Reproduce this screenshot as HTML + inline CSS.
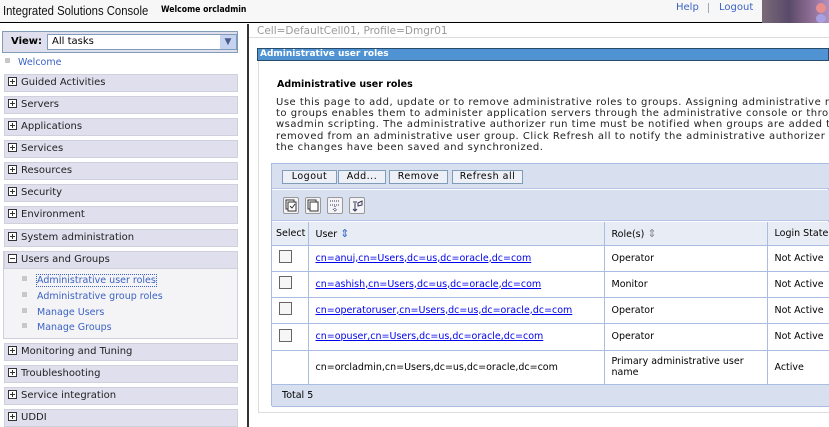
<!DOCTYPE html>
<html><head><style>
*{margin:0;padding:0;box-sizing:border-box}
body{width:829px;height:427px;overflow:hidden;background:#fff;font-family:"DejaVu Sans","Liberation Sans",sans-serif;font-size:9.5px;color:#000;position:relative}
.a{position:absolute;white-space:nowrap}
.nav{position:absolute;left:4px;width:234px;height:18px;background:#dfdfee;border:1px solid #d0d0dc;padding-left:3px;line-height:16px;font-size:10px;color:#222}
.pl{display:inline-block;width:9px;height:9px;border:1px solid #333;position:relative;vertical-align:-1px;margin-right:4px;background:#fff}
.pl:before{content:"";position:absolute;left:1px;top:3px;width:5px;height:1px;background:#333}
.pl.p:after{content:"";position:absolute;left:3px;top:1px;width:1px;height:5px;background:#333}
.lk{color:#3b62c4}
.bul{display:inline-block;width:5px;height:5px;background:#c8c8c8;margin-right:10px;vertical-align:2px}
.btn{position:absolute;top:170px;height:14px;border:1px solid #7f9db9;background:#eef0f8;font-size:9.5px;line-height:12px;text-align:center;letter-spacing:.5px}
.ic{position:absolute;top:197px;width:16px;height:17px;border:1px solid #999;background:#f4f4f8;border-radius:2px}
td{border-right:1px solid #a9bde3;border-bottom:1px solid #a9bde3;padding-left:7px;font-size:9.5px;white-space:nowrap}
a{color:#0000ee}
.cb{display:inline-block;width:13px;height:13px;border:1px solid #666;background:#f6f6f6}
</style></head><body>
<div class="a" style="left:0;top:0;width:829px;height:23px;background:#f7f7f7;border-bottom:1px solid #000"></div>
<div class="a" style="left:3px;top:3px;font-family:'Liberation Sans',sans-serif;font-size:13px;transform:scaleX(.87);transform-origin:left;color:#111">Integrated Solutions Console</div>
<div class="a" style="left:161px;top:5px;font-family:'DejaVu Sans',sans-serif;font-size:9px;font-weight:bold;transform:scaleX(.86);transform-origin:left">Welcome orcladmin</div>
<div class="a lk" style="left:676px;top:2px;font-size:10px">Help</div>
<div class="a" style="left:708px;top:3px;width:1px;height:10px;background:#9ab"></div>
<div class="a lk" style="left:719px;top:2px;font-size:10px">Logout</div>
<div class="a" style="left:762px;top:0;width:67px;height:23px;background:linear-gradient(90deg,#7a6a78,#5a4a6a 40%,#8a6a90 70%,#b090c0)"></div>
<div class="a" style="left:816px;top:3px;width:10px;height:10px;border-radius:50%;background:#e89090"></div>
<div class="a" style="left:816px;top:14px;width:10px;height:9px;border-radius:50%;background:#a8a0e0"></div>

<div class="a" style="left:247px;top:24px;width:2px;height:403px;background:#333"></div>
<!-- left nav -->
<div class="a" style="left:2px;top:31px;width:236px;height:22px;border:1px solid #7f9db9;background:#dfdfee"></div>
<div class="a" style="left:11px;top:36px;font-weight:bold;font-size:10px">View:</div>
<div class="a" style="left:47px;top:34px;width:190px;height:16px;background:#fff;border:1px solid #7f9db9;padding-left:4px;font-size:10px;line-height:14px">All tasks</div>
<div class="a" style="left:220px;top:35px;width:16px;height:14px;background:#c6d3f0;color:#4a5c8a;font-size:9px;text-align:center;line-height:14px">&#9660;</div>
<div class="a" style="left:5px;top:57px"><span class="bul" style="margin-right:8px"></span><span class="lk">Welcome</span></div>
<div class="nav" style="top:74px"><span class="pl p"></span>Guided Activities</div>
<div class="nav" style="top:96px"><span class="pl p"></span>Servers</div>
<div class="nav" style="top:118px"><span class="pl p"></span>Applications</div>
<div class="nav" style="top:140px"><span class="pl p"></span>Services</div>
<div class="nav" style="top:162px"><span class="pl p"></span>Resources</div>
<div class="nav" style="top:184px"><span class="pl p"></span>Security</div>
<div class="nav" style="top:206px"><span class="pl p"></span>Environment</div>
<div class="nav" style="top:229px"><span class="pl p"></span>System administration</div>
<div class="a" style="left:3px;top:251px;width:235px;height:88px;border:1px solid #d0d0dc;background:#f4f4f6"></div>
<div class="nav" style="top:251px"><span class="pl"></span>Users and Groups</div>
<div class="a" style="left:22px;top:275px"><span class="bul"></span><span class="lk" style="outline:1px dotted #3b62c4">Administrative user roles</span></div>
<div class="a" style="left:22px;top:291px"><span class="bul"></span><span class="lk">Administrative group roles</span></div>
<div class="a" style="left:22px;top:307px"><span class="bul"></span><span class="lk">Manage Users</span></div>
<div class="a" style="left:22px;top:322px"><span class="bul"></span><span class="lk">Manage Groups</span></div>
<div class="nav" style="top:343px"><span class="pl p"></span>Monitoring and Tuning</div>
<div class="nav" style="top:365px"><span class="pl p"></span>Troubleshooting</div>
<div class="nav" style="top:387px"><span class="pl p"></span>Service integration</div>
<div class="nav" style="top:409px"><span class="pl p"></span>UDDI</div>

<!-- right -->
<div class="a" style="left:257px;top:25px;font-size:10.5px;color:#999">Cell=DefaultCell01, Profile=Dmgr01</div>
<div class="a" style="left:249px;top:37px;width:580px;height:1px;background:#ddd"></div>
<div class="a" style="left:257px;top:48px;width:572px;height:13px;background:#4f93d3;border:1px solid #2a4a6a;color:#fff;font-weight:bold;font-size:9px;line-height:11px;padding-left:2px">Administrative user roles</div>
<div class="a" style="left:258px;top:61px;width:1px;height:351px;background:#ddd"></div>
<div class="a" style="left:258px;top:412px;width:571px;height:1px;background:#ddd"></div>
<div class="a" style="left:277px;top:79px;font-weight:bold;font-size:9.5px">Administrative user roles</div>
<div class="a" style="left:276px;top:97px;line-height:11.2px;font-size:10px;letter-spacing:.5px;color:#222">Use this page to add, update or to remove administrative roles to groups. Assigning administrative r<br>to groups enables them to administer application servers through the administrative console or throu<br>wsadmin scripting. The administrative authorizer run time must be notified when groups are added to<br>removed from an administrative user group. Click Refresh all to notify the administrative authorizer<br>the changes have been saved and synchronized.</div>

<div class="a" style="left:271px;top:163px;width:558px;height:243px;border:1px solid #a9bde3;background:#fff"></div>
<div class="a" style="left:272px;top:164px;width:557px;height:25px;background:#d8dfee;border-bottom:1px solid #b5c4e3"></div>
<div class="btn" style="left:282px;width:55px">Logout</div>
<div class="btn" style="left:338px;width:48px">Add...</div>
<div class="btn" style="left:389px;width:59px">Remove</div>
<div class="btn" style="left:452px;width:71px">Refresh all</div>
<div class="a" style="left:272px;top:190px;width:557px;height:31px;background:#d8dfee;border-bottom:1px solid #b5c4e3"></div>
<div class="ic" style="left:283px"><svg width="14" height="15"><rect x="2" y="2" width="8" height="9" fill="#fff" stroke="#333"/><rect x="4" y="4" width="8" height="9" fill="#fff" stroke="#333"/><path d="M6 8l2 2 3-4" stroke="#333" fill="none"/></svg></div>
<div class="ic" style="left:305px"><svg width="14" height="15"><rect x="2" y="2" width="8" height="9" fill="#fff" stroke="#333"/><rect x="4" y="4" width="8" height="9" fill="#fff" stroke="#333"/></svg></div>
<div class="ic" style="left:327px"><svg width="14" height="15"><path d="M2 3h10M2 7h10M7 8v5M5 11l2 2 2-2" stroke="#335" fill="none" stroke-dasharray="1 1"/></svg></div>
<div class="ic" style="left:349px"><svg width="14" height="15"><path d="M3 4h4M5 5v8M3 11l2 2 2-2M8 5l4-2v4l-4 1z" stroke="#335" fill="none"/></svg></div>

<table class="a" style="left:272px;top:222px;border-collapse:collapse;background:#fff">
<tr style="height:23px;background:#e8ecf5"><td style="width:36px;padding-left:4px">Select</td><td style="width:296px">User <span style="color:#36c;font-size:11px">&#8661;</span></td><td style="width:163px">Role(s) <span style="color:#888;font-size:11px">&#8661;</span></td><td style="width:62px;border-right:0">Login State</td></tr>
<tr style="height:26px"><td><span class="cb"></span></td><td><a href="#">cn=anuj,cn=Users,dc=us,dc=oracle,dc=com</a></td><td>Operator</td><td style="border-right:0">Not Active</td></tr>
<tr style="height:26px"><td><span class="cb"></span></td><td><a href="#">cn=ashish,cn=Users,dc=us,dc=oracle,dc=com</a></td><td>Monitor</td><td style="border-right:0">Not Active</td></tr>
<tr style="height:26px"><td><span class="cb"></span></td><td><a href="#">cn=operatoruser,cn=Users,dc=us,dc=oracle,dc=com</a></td><td>Operator</td><td style="border-right:0">Not Active</td></tr>
<tr style="height:27px"><td><span class="cb"></span></td><td><a href="#">cn=opuser,cn=Users,dc=us,dc=oracle,dc=com</a></td><td>Operator</td><td style="border-right:0">Not Active</td></tr>
<tr style="height:34px"><td></td><td>cn=orcladmin,cn=Users,dc=us,dc=oracle,dc=com</td><td style="line-height:11px">Primary administrative user<br>name</td><td style="border-right:0">Active</td></tr>
<tr style="height:22px;background:#d8dfee"><td colspan="4" style="padding-left:10px;border-right:0">Total 5</td></tr>
</table>
</body></html>
